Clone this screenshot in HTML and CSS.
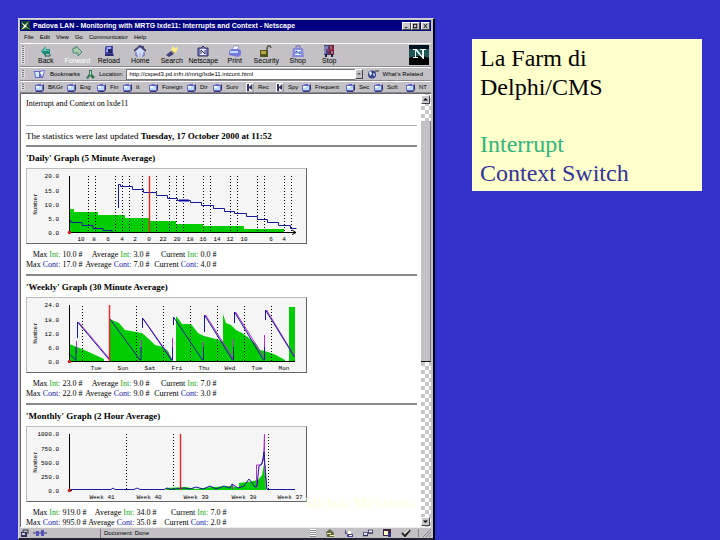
FILE: index.html
```
<!DOCTYPE html>
<html lang="it">
<head>
<meta charset="utf-8">
<title>La Farm di Delphi/CMS</title>
<link rel="stylesheet" href="styles.css">
</head>
<body>
<svg class="defs" aria-hidden="true">
  <symbol id="folder" viewBox="0 0 10 9"><path d="M1 3h6l2-2v6l-2 2H1z" fill="#336"/><path d="M0 2h2l1-1h3v1h2v6H0z" fill="#66c"/><path d="M1 3h6v4H1z" fill="#bdf"/><path d="M1 3h3v2H1z" fill="#eff"/></symbol>
  <symbol id="page" viewBox="0 0 10 9"><path d="M1 0h7v9H1z" fill="#fff"/><path d="M2 1h2v3l3-3v6L4 5v3H2z" fill="#336"/><path d="M8 1v8H2" fill="none" stroke="#777"/></symbol>
</svg>
<main class="slide">
  <section class="window">
    <header class="titlebar">
      <svg class="app-icon" viewBox="0 0 9 9"><path d="M0 0h9v9H0z" fill="#143"/><path d="M0 1l4 3 4-4-3 5 4 4-4-3-5 3 3-4z" fill="#ffc"/></svg>
      <h1>Padova LAN - Monitoring with MRTG lxde11: Interrupts and Context - Netscape</h1>
      <button class="winbtn" aria-label="Minimize"><svg viewBox="0 0 8 7"><path d="M2 5h3v1H2z"/></svg></button>
      <button class="winbtn" aria-label="Maximize"><svg viewBox="0 0 8 7"><path d="M1 1h5v5H1z M2 2v3h3V2z" fill-rule="evenodd"/></svg></button>
      <button class="winbtn close" aria-label="Close"><svg viewBox="0 0 8 7"><path d="M2 1l4 5M6 1L2 6" stroke="#000"/></svg></button>
    </header>
    <nav class="menu">
      <button>File</button><button>Edit</button><button>View</button><button>Go</button><button>Communicator</button><button>Help</button>
    </nav>
    <div class="bar tools">
      <span class="grip"></span>
      <div class="buttons">
        <button><svg viewBox="0 0 12 12"><path d="M1 6l5-5v3h4v5H6v3z" fill="#287"/><path d="M2 6l4-4v3h3v1z" fill="#6cb"/><path d="M5 11h5V9" fill="none" stroke="#254"/></svg>Back</button>
        <button class="off"><svg viewBox="0 0 12 12"><path d="M2 8V3h3V1l6 6-4 4V8z" fill="#aca" stroke="#487"/></svg>Forward</button>
        <button><svg viewBox="0 0 12 12"><path d="M3 1h7v10H2V3z" fill="#44a"/><path d="M4 2h4v5H3z" fill="#9af"/><path d="M5 4h4v4H5z" fill="#226"/><path d="M2 10h9" stroke="#113"/></svg>Reload</button>
        <button><svg viewBox="0 0 12 12"><path d="M2 6l4-4 4 4v6H7V8H5v4H2z" fill="#cdf"/><path d="M0 6l6-5 6 5M9 3V1" fill="none" stroke="#447" stroke-width="2"/><path d="M2 7v4h2M10 7v4H8" fill="none" stroke="#55a"/></svg>Home</button>
        <button><svg viewBox="0 0 12 12"><path d="M0 10l5-4 3 3-5 3z" fill="#447"/><path d="M5 5l2-4 2 2 3-1-1 4-3 3z" fill="#fe8"/><path d="M5 6l4 2" stroke="#886"/></svg>Search</button>
        <button><svg viewBox="0 0 12 12"><path d="M1 3h3l2-2 2 2h3v8H1z" fill="#77c" stroke="#335"/><path d="M3 4h6v6H3z" fill="#eef"/><path d="M4 9V5l4 4V5" fill="none" stroke="#225"/></svg>Netscape</button>
        <button><svg viewBox="0 0 12 12"><path d="M3 5l2-4h5L8 5z" fill="#fff" stroke="#99c"/><path d="M0 6l3-2h7l2 2v4l-3 2-9-2z" fill="#77d"/><path d="M1 6h8v2H1z" fill="#bdf"/></svg>Print</button>
        <button><svg viewBox="0 0 12 12"><path d="M7 6V3l1-2h2l1 2" fill="none" stroke="#554" stroke-width="1.5"/><path d="M0 5h8v7H0z" fill="#552"/><path d="M1 6h5v3H1z" fill="#ba4"/></svg>Security</button>
        <button><svg viewBox="0 0 12 12"><path d="M4 4V1h4v3" fill="none" stroke="#66b"/><path d="M1 3h10l1 9H0z" fill="#88d"/><path d="M3 5h6v5H3z" fill="#dff"/><path d="M4 9V6l4 3V6" fill="none" stroke="#33a"/></svg>Shop</button>
        <button><svg viewBox="0 0 12 12"><path d="M1 0h5v10H1z" fill="#448"/><path d="M6 0h5v10H6z" fill="#723"/><path d="M2 1v8M4 1v3M8 1v3M9 6v3" stroke="#bbe"/><path d="M3 5h7" stroke="#b35"/><path d="M3 9v3M9 9v3" stroke="#224" stroke-width="2"/></svg>Stop</button>
      </div>
      <svg class="logo" viewBox="0 0 20 20"><path d="M0 0h20v20H0z" fill="#012"/><path d="M0 4h20v9H0z" fill="#255"/><path d="M0 13q10-4 20 0v7H0z" fill="#000"/><path d="M4 4h4l5 7V5h-2V4h6v1h-2v9h-1L7 6v6h2v1H4v-1h2V5H4z" fill="#eff"/></svg>
    </div>
    <div class="bar location">
      <span class="grip"></span>
      <button class="tool"><svg viewBox="0 0 12 9"><path d="M0 1h5l6-1-2 8H1z" fill="#66c"/><path d="M1 2h4v5H2z" fill="#cef"/><path d="M6 2l4-1-2 6z" fill="#eff"/></svg>Bookmarks</button>
      <label for="url"><svg viewBox="0 0 9 9"><path d="M3 0h3v4l3 3-2 2-3-3-2 3-2-1 3-4z" fill="#375"/><path d="M4 1h1v4H4z" fill="#bec"/></svg>Location:</label>
      <input id="url" type="text" value="http://csped3.pd.infn.it/mrtg/lxde11.intcont.html">
      <button class="drop" aria-label="Open address list"><svg viewBox="0 0 7 9"><path d="M2 4h3v1H2z"/></svg></button>
      <button class="tool related"><svg viewBox="0 0 12 9"><circle cx="5" cy="4.500" r="4" fill="#348"/><path d="M2 2l2-1 1 3-2 2zM6 3l2 1-1 3z" fill="#def"/><path d="M8 1h4" stroke="#333"/></svg>What's Related</button>
    </div>
    <nav class="bar personal">
      <span class="grip"></span>
      <a href="#"><svg><use href="#folder"/></svg>BKGr</a><a href="#"><svg><use href="#folder"/></svg>Eng</a><a href="#"><svg><use href="#folder"/></svg>Fin</a><a href="#"><svg><use href="#folder"/></svg>It</a><a href="#"><svg><use href="#folder"/></svg>Foreign</a><a href="#"><svg><use href="#folder"/></svg>Dir</a><a href="#"><svg><use href="#folder"/></svg>Surv</a><a href="#"><svg><use href="#page"/></svg>Rec</a><a href="#"><svg><use href="#page"/></svg>Spy</a><a href="#"><svg><use href="#folder"/></svg>Frequent</a><a href="#"><svg><use href="#folder"/></svg>Sec</a><a href="#"><svg><use href="#folder"/></svg>Soft</a><a href="#"><svg><use href="#folder"/></svg>NT</a>
    </nav>
    <div class="view">
      <article class="doc">
        <p class="intro">Interrupt and Context on lxde11</p>
        <hr>
        <p class="updated">The statistics were last updated <b>Tuesday, 17 October 2000 at 11:52</b></p>
        <section class="report">
          <h2>'Daily' Graph (5 Minute Average)</h2>
          <svg class="chart" viewBox="1 1 279 74">
            <path class="area" d="M43 64V41h5v3h24v3h27v3h25v3h26v3h27v2h41v3h40v3z"/>
            <path class="grid" d="M62.500 8v56M69.500 8v56M89.500 8v56M96.500 8v56M103.500 8v56M116.500 8v56M130.500 8v56M143.500 8v56M150.500 8v56M157.500 8v56M177.500 8v56M184.500 8v56M204.500 8v56M211.500 8v56M231.500 8v56M238.500 8v56M258.500 8v56M265.500 8v56"/>
            <path class="cont" d="M43 52.500h2v2h11v3h11v3h10v2h9v2h6M92.500 40V16.500h2v2h12v3h11v3h13v3h11v3h10v2h13v2h11v3h12v3h11v3h10v2h12v3h11v3h10v3h11v3h12v3h6"/>
            <path d="M153 32.500h10" stroke="#00a" stroke-width="2"/>
            <path class="axis" d="M43.500 8v56M43 64.500h227M266 62l4 2.500-4 2"/>
            <path class="mark" d="M123.500 8v56"/><circle cx="43.500" cy="64.500" r="1.800" fill="#c22"/>
            <g class="y"><text x="33" y="10">20.0</text><text x="33" y="25">15.0</text><text x="33" y="39">10.0</text><text x="33" y="53">5.0</text><text x="33" y="67">0.0</text><text class="side" transform="translate(11 36) rotate(-90)">Number</text></g>
            <g class="x"><text x="55" y="73">10</text><text x="68" y="73">8</text><text x="82" y="73">6</text><text x="96" y="73">4</text><text x="109" y="73">2</text><text x="123" y="73">0</text><text x="137" y="73">22</text><text x="151" y="73">20</text><text x="164" y="73">18</text><text x="177" y="73">16</text><text x="191" y="73">14</text><text x="204" y="73">12</text><text x="218" y="73">10</text><text x="245" y="73">6</text><text x="258" y="73">4</text></g>
          </svg>
          <table>
            <tr><td>Max <i>Int:</i> 10.0 #</td><td>Average <i>Int:</i> 3.0 #</td><td>Current <i>Int:</i> 0.0 #</td></tr>
            <tr><td>Max <u>Cont:</u> 17.0 #</td><td>Average <u>Cont:</u> 7.0 #</td><td>Current <u>Cont:</u> 4.0 #</td></tr>
          </table>
        </section>
        <section class="report">
          <h2>'Weekly' Graph (30 Minute Average)</h2>
          <svg class="chart" viewBox="1 1 279 74">
            <path class="area" d="M43 64V47L56 52L67 57L78 62V64zM84 64V22L86 23L93 26L99 33L116 36L124 43L129 48L137 50L142 54L147 64zM150 64V19L154 24L156 27H165L172 36L178 39L190 42L197 45V64zM197 64V17L200 26L205 28L210 33L216 36L223 41L230 47L234 53L242 55L250 58L259 63V64zM263 64V10H269V64z"/>
            <path class="grid" d="M56.500 9v55M110.500 9v55M137.500 9v55M164.500 9v55M191.500 9v55M218.500 9v55M245.500 9v55"/>
            <path class="peak" d="M50.500 56V44M52.500 25l32 38M115.500 54V43M117.500 22l28 40M146.500 54V41M177.500 54V45M179.500 18l28 44M207.500 54V42M209.500 15l29 46M238.500 54V38M240.500 13l28 46"/>
            <path class="cont" d="M43 56.500l7 7V50M51.500 41V25l32 38M84 22l30 41h1V50M116.500 31V21l29 42h1V50M147.500 28V20l29 43h1V50M178.500 35V18l28 45h1V50M208.500 26V15l29 48h1V50M239.500 23V13l29 47"/>
            <path class="axis" d="M43.500 8v56M43 64.500h226"/>
            <path class="mark" d="M83.500 8v56"/><circle cx="43.500" cy="64.500" r="1.800" fill="#c22"/>
            <g class="y"><text x="33" y="10">24.0</text><text x="33" y="25">18.0</text><text x="33" y="39">12.0</text><text x="33" y="53">6.0</text><text x="33" y="67">0.0</text><text class="side" transform="translate(11 36) rotate(-90)">Number</text></g>
            <g class="x"><text x="70" y="73">Tue</text><text x="97" y="73">Sun</text><text x="124" y="73">Sat</text><text x="151" y="73">Fri</text><text x="178" y="73">Thu</text><text x="204" y="73">Wed</text><text x="231" y="73">Tue</text><text x="258" y="73">Mon</text></g>
          </svg>
          <table>
            <tr><td>Max <i>Int:</i> 23.0 #</td><td>Average <i>Int:</i> 9.0 #</td><td>Current <i>Int:</i> 7.0 #</td></tr>
            <tr><td>Max <u>Cont:</u> 22.0 #</td><td>Average <u>Cont:</u> 9.0 #</td><td>Current <u>Cont:</u> 3.0 #</td></tr>
          </table>
        </section>
        <section class="report">
          <h2>'Monthly' Graph (2 Hour Average)</h2>
          <svg class="chart" viewBox="1 1 279 74">
            <path class="area" d="M140 64V62L160 61L170 63L186 61L206 60L213 62V57L222 56L232 54L236 49L238 38L240 64z"/>
            <path class="grid" d="M100.500 8v56M147.500 8v56M242.500 8v56"/>
            <path class="peak" d="M206.500 63v-5M230.500 62V39h4l3-5 1-26v32l2 23"/>
            <path class="cont" d="M43 63.500H85L87 62L89 63.500H108L111 62L114 63.500H138L141 62L145 63.500L158 62L164 63L170 61L177 63L184 60L190 63L198 60L204 62L206 58L212 62L218 60L223 53L229 61L231 60L233 40L236 38L238 26L239 40L241 63.500H269"/>
            <path class="axis" d="M43.500 8v56M43 64.500h3"/>
            <path class="mark" d="M154.500 8v56"/><circle cx="43.500" cy="64.500" r="1.800" fill="#c22"/>
            <g class="y"><text x="33" y="10">1000.0</text><text x="33" y="25">750.0</text><text x="33" y="39">500.0</text><text x="33" y="53">250.0</text><text x="33" y="67">0.0</text><text class="side" transform="translate(11 36) rotate(-90)">Number</text></g>
            <g class="x"><text x="76" y="73">Week 41</text><text x="123" y="73">Week 40</text><text x="170" y="73">Week 39</text><text x="218" y="73">Week 38</text><text x="264" y="73">Week 37</text></g>
          </svg>
          <table class="wide">
            <tr><td>Max <i>Int:</i> 919.0 #</td><td>Average <i>Int:</i> 34.0 #</td><td>Current <i>Int:</i> 7.0 #</td></tr>
            <tr><td>Max <u>Cont:</u> 995.0 #</td><td>Average <u>Cont:</u> 35.0 #</td><td>Current <u>Cont:</u> 2.0 #</td></tr>
          </table>
        </section>
      </article>
      <div class="scroll">
        <button aria-label="Scroll up"><svg viewBox="0 0 7 7"><path d="M1 4.500h5L3.500 2z"/></svg></button>
        <span class="thumb"></span>
        <button class="down" aria-label="Scroll down"><svg viewBox="0 0 7 7"><path d="M1 2.500h5L3.500 5z"/></svg></button>
      </div>
    </div>
    <footer class="status">
      <svg class="lock" viewBox="0 0 10 8"><path d="M1 3h6v5H1z" fill="#335"/><path d="M3 3V1h5v4" fill="none" stroke="#333"/><path d="M2 4h3v2H2z" fill="#cce"/></svg>
      <svg class="plug" viewBox="0 0 14 8"><path d="M0 4h14" stroke="#336"/><path d="M3 2h3v5H3zM8 1h3v6H8z" fill="#55b"/></svg>
      <span class="progress"></span>
      <span class="message">Document: Done</span>
      <span class="dock">
        <span class="lines"></span>
        <svg viewBox="0 0 10 8"><path d="M1 3l4-3 4 4v4H2z" fill="#664"/><path d="M2 4h4v1H2zM5 6h4v1H5z" fill="#ffb"/></svg>
        <svg viewBox="0 0 10 8"><path d="M1 0v5h8v3H3V5" fill="#448"/><path d="M4 2h3v3H4zM5 6h3v1H5z" fill="#ffd"/></svg>
        <svg viewBox="0 0 12 8"><path d="M0 3h6v5H0zM6 0h6v5H6z" fill="#336"/><path d="M1 4h4v2H1zM7 1h4v2H7z" fill="#fff"/></svg>
        <svg viewBox="0 0 10 8"><path d="M1 0h8v7H1z" fill="#424"/><path d="M2 2h4v4H2z" fill="#ffc"/><path d="M6 4h3v4H6z" fill="#338"/></svg>
        <svg viewBox="0 0 10 8"><path d="M1 4l3 3 5-6" fill="none" stroke="#222" stroke-width="2"/><path d="M3 5l5-4" stroke="#ffd"/></svg>
      </span>
      <svg class="resize" viewBox="0 0 8 8"><path d="M0 8l8-8M3 8l5-5M6 8l2-2" stroke="#888"/></svg>
    </footer>
    <p class="author">Michele Michelotto</p>
  </section>
  <aside class="note">
    <p>La Farm di<br>Delphi/CMS</p>
    <p class="key"><span class="interrupt">Interrupt</span><br><span class="context">Context Switch</span></p>
  </aside>
</main>
</body>
</html>
```

FILE: styles.css
```
* { box-sizing: border-box; }
body { margin: 0; background: #3333cc; font-family: "Liberation Sans", Arial, sans-serif; font-size: 6px; line-height: 8px; color: #000; }
p, h1, h2 { margin: 0; }
svg { display: block; flex: none; }
button { font: inherit; color: inherit; background: none; border: 0; padding: 0; margin: 0; }
a { color: inherit; text-decoration: none; }
.defs { position: absolute; width: 0; height: 0; }
.slide { min-height: 100vh; padding: 18px 18px 0; display: grid; grid-template-columns: 417fr 230fr; column-gap: 37px; align-items: start; }

.window { position: relative; min-height: calc(100vh - 18px); display: flex; flex-direction: column; background: #c3c1c5; border: 1px solid #d4d2dc; border-right: 2px solid #001; border-bottom: 2px solid #223; padding: 1px 2px 0 1px; }
.titlebar { display: flex; align-items: center; height: 11px; padding: 0 1px; background: #000080; color: #fff; }
.titlebar h1 { flex: 1; margin-left: 3px; font-size: 7px; font-weight: bold; white-space: nowrap; }
.app-icon { width: 9px; height: 9px; }
.winbtn { width: 9px; height: 8px; background: #c8c6ca; border: 1px solid; border-color: #fff #444 #444 #fff; }
.winbtn svg { width: 100%; height: 100%; }
.close { margin-left: 1px; }
.menu { display: flex; gap: 6px; height: 12px; padding: 0 4px; align-items: center; }

.bar { display: flex; align-items: center; border-top: 1px solid #fff; border-bottom: 1px solid #8a888c; padding-left: 1px; }
.grip { align-self: stretch; width: 4px; margin: 2px 0; flex: none; background: repeating-linear-gradient(#777 0 1px, #ddd 1px 2px); border-left: 1px solid #ddd; border-right: 1px solid #ddd; }
.tools { height: 24px; font-size: 7px; }
.buttons { flex: 0 1 315px; margin-left: 5px; display: grid; grid-template-columns: repeat(10, 1fr); }
.buttons button { display: flex; flex-direction: column; align-items: center; }
.buttons svg { width: 12px; height: 12px; }
.off { color: #fff; }
.logo { width: 20px; height: 20px; margin-left: auto; margin-right: 2px; }

.location { height: 14px; }
.tool, .location label { display: flex; align-items: center; gap: 4px; white-space: nowrap; flex: none; }
.tool { margin-left: 9px; }
.tool svg { width: 12px; height: 9px; }
.location label { margin-left: 6px; }
.location label svg { width: 9px; height: 9px; }
.location input { flex: 1; min-width: 0; height: 11px; margin-left: 3px; padding: 0 2px; border: 1px solid #777; border-right: 0; background: #fff; font: inherit; border-radius: 0; }
.drop { width: 8px; height: 10px; border: 1px solid; border-color: #fff #444 #444 #fff; }
.related { margin: 0 8px 0 4px; }

.personal { height: 12px; display: grid; grid-template-columns: 4px 42px 30px 26px 26px 38px 26px 32px 30px 27px 44px 28px 32px 1fr; }
.personal a { display: flex; align-items: center; gap: 3px; white-space: nowrap; }
.personal a:first-of-type { padding-left: 10px; }
.personal svg { width: 10px; height: 9px; }

.view { flex: 1; display: flex; background: #fff; border-left: 1px solid #667; border-top: 1px solid #667; }
.doc { flex: 1; padding: 5px 4px 0 5px; font: 8px/10px "Liberation Serif", "Times New Roman", serif; }
.doc hr { height: 1px; margin: 0; border: 0; background: #aaa; }
.intro { height: 11px; margin-bottom: 15px; }
.updated { padding: 5px 0 4px; font-size: 9px; }
.report { border-top: 2px solid #888; padding-top: 5px; height: 129px; }
.report h2 { font-size: 9px; line-height: 12px; margin-bottom: 4px; }
.report:last-child { height: 123px; }
.chart { width: 281px; height: 76px; background: #f5f5f5; border: 1px solid; border-color: #bbb #666 #666 #bbb; }
.report table { margin-top: 6px; border-collapse: collapse; }
.report td { width: 67px; padding: 0; text-align: right; white-space: nowrap; }
.report td:first-child { width: 52px; }
.report .wide td { width: 70px; }
.report .wide td:first-child { width: 58px; }
.report i { color: #2a2; font-style: normal; }
.report u { color: #22a; text-decoration: none; }

.area { fill: #00cc00; }
.grid { fill: none; stroke: #000; stroke-dasharray: 1 2; }
.cont { fill: none; stroke: #1a1a99; }
.peak { fill: none; stroke: #b030c8; }
.axis { fill: none; stroke: #000; }
.mark { stroke: #ee2222; stroke-width: 1.4; }
.chart text { font: 6px "Liberation Mono", monospace; }
.y text { text-anchor: end; }
.x text, .y .side { text-anchor: middle; }

.scroll { width: 10px; flex: none; display: flex; flex-direction: column; padding: 1px 0; background: repeating-conic-gradient(#c8c6c8 0 25%, #fff 0 50%) 0 0 / 8px 8px; }
.scroll button { width: 9px; height: 9px; background: #c8c6ca; border: 1px solid; border-color: #fff #444 #444 #fff; }
.scroll svg { width: 7px; height: 7px; }
.thumb { flex: 0 0 56%; margin-top: 17px; background: #c3c1c5; border-right: 1px solid #777; border-bottom: 1px solid #111; }
.scroll .down { margin-top: auto; }

.status { height: 11px; display: flex; align-items: center; border-top: 1px solid #eee; }
.status svg { width: 10px; height: 8px; }
.status .plug { width: 14px; margin-left: 3px; }
.progress { width: 54px; height: 9px; border-right: 1px solid #777; }
.message { margin-left: 3px; }
.dock { margin-left: auto; display: flex; gap: 9px; padding-right: 7px; border-right: 1px solid #888; }
.lines { width: 6px; height: 8px; background: repeating-linear-gradient(#fff 0 1px, #888 1px 2px); }
.status .resize { width: 8px; margin-left: 4px; }

.author { position: absolute; left: 286px; bottom: 26px; font: 14px/16px "Liberation Serif", serif; color: #ffffdd; white-space: nowrap; }

.note { margin-top: 21px; padding: 5px 8px 3px; background: #ffffcc; font: 24px/29px "Liberation Serif", "Times New Roman", serif; }
.key { margin-top: 28px; }
.interrupt { color: #33b47c; }
.context { color: #333399; }
```
